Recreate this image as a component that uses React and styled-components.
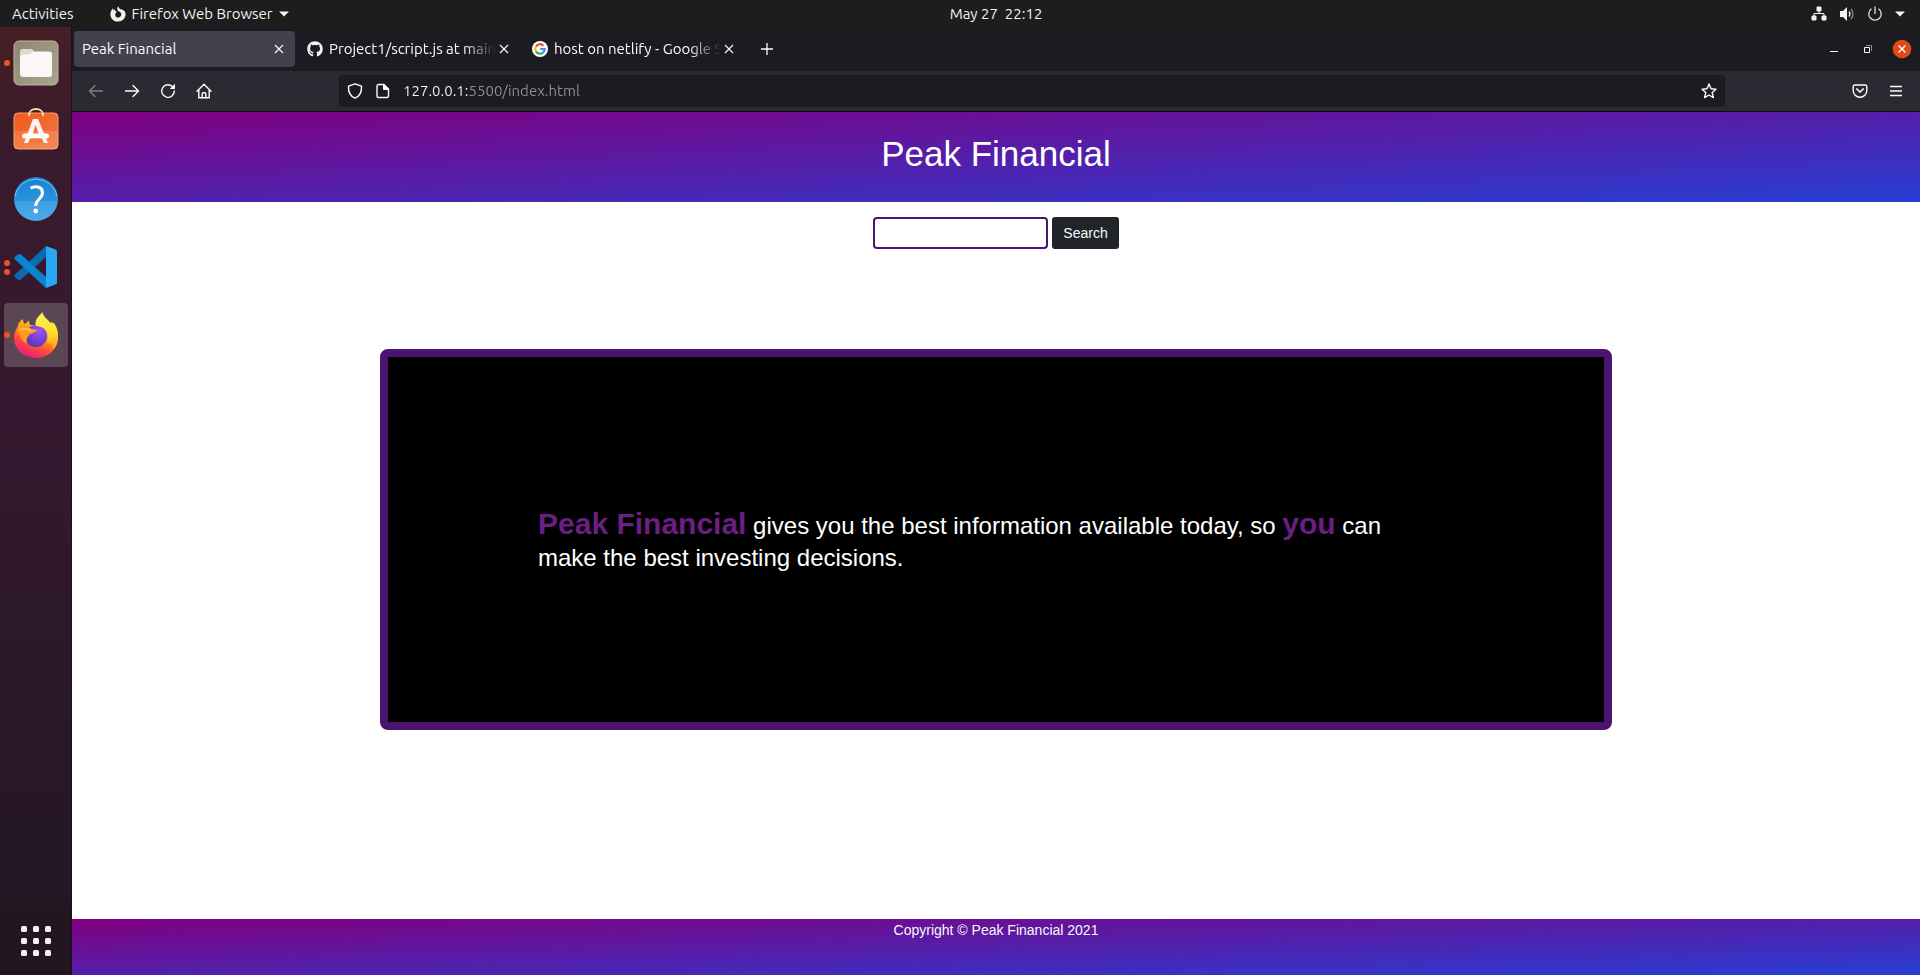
import React from 'react';
import styled, { createGlobalStyle, css } from 'styled-components';
import { FaGithub } from 'react-icons/fa';

const GlobalStyle = createGlobalStyle`
  *, *::before, *::after { box-sizing: border-box; }
  body { margin: 0; background: #fff; }
  button { font: inherit; color: inherit; border: 0; padding: 0; background: none; cursor: pointer; }
  svg { display: block; flex: none; }
  p, h1 { margin: 0; }
`;

const uiFont = "Ubuntu, 'Noto Sans', sans-serif";
const pageFont = "'Liberation Sans', Arial, sans-serif";
const brandGradient = 'linear-gradient(to bottom right, #800080, #273ed4)';

const Desktop = styled.div`
  display: flex;
  flex-direction: column;
  min-height: 100vh;
  font: 15px/20px ${uiFont};
  color: #f2f2f2;
`;

const TopBar = styled.header`
  display: grid;
  grid-template-columns: 72px 1fr auto 1fr;
  align-items: center;
  height: 27px;
  background: #1d1d1d;
`;

const TopMenus = styled.nav`
  grid-column: 1 / 3;
  display: flex;
  align-items: center;
  gap: 36px;
  padding-left: 12px;
`;

const TopButton = styled.button`
  display: flex;
  align-items: center;
  gap: 6px;
`;

const StatusArea = styled.button`
  justify-self: end;
  display: flex;
  align-items: center;
  gap: 12px;
  padding-right: 15px;
`;

const Workspace = styled.div`
  flex: 1;
  display: flex;
`;

const Dock = styled.nav`
  flex: none;
  display: flex;
  flex-direction: column;
  gap: 4px;
  width: 72px;
  padding: 4px 3px 2px 4px;
  background: linear-gradient(#471f25, #3a1a2c 12%, #351930 40%, #251725 88%, #23151d);
  border-right: 1px solid #1c1018;
`;

const DockItem = styled.button`
  display: flex;
  align-items: center;
  width: 64px;
  height: 64px;
  border-radius: 4px;
  background: ${(p) => (p.$active ? '#5b4653' : 'none')};
  ${(p) => p.$last && css`margin-top: auto;`}
`;

const RunningDots = styled.span`
  display: flex;
  flex-direction: column;
  align-items: center;
  gap: 3px;
  width: 6px;
`;

const Dot = styled.span`
  width: 6px;
  height: 6px;
  border-radius: 50%;
  background: #e95420;
`;

const DockIcon = styled.span`
  display: block;
  margin-left: 3px;
`;

const Browser = styled.main`
  flex: 1;
  min-width: 0;
  display: flex;
  flex-direction: column;
`;

const TabStrip = styled.div`
  display: flex;
  align-items: center;
  gap: 4px;
  height: 44px;
  padding-left: 2px;
  background: #1c1b22;
`;

const Tab = styled.div`
  display: flex;
  align-items: center;
  width: 221px;
  height: 36px;
  padding: 0 8px;
  border-radius: 4px;
  background: ${(p) => (p.$active ? '#42414d' : 'none')};
`;

const TabLabel = styled.button`
  flex: 1;
  min-width: 0;
  display: flex;
  align-items: center;
  gap: 6px;
`;

const TabTitle = styled.span`
  flex: 1;
  overflow: hidden;
  text-align: left;
  white-space: nowrap;
  color: #fbfbfe;
  ${(p) => p.$fade && css`mask-image: linear-gradient(to left, transparent, #000 32px);`}
`;

const IconButton = styled.button`
  flex: none;
  display: grid;
  place-items: center;
  width: ${(p) => p.$size || 36}px;
  height: ${(p) => p.$size || 36}px;
  color: #fbfbfe;
  opacity: ${(p) => (p.disabled ? 0.4 : 1)};
`;

const WindowControls = styled.div`
  display: flex;
  align-items: center;
  gap: 10px;
  margin-left: auto;
  padding-right: 6px;
`;

const Toolbar = styled.div`
  display: flex;
  align-items: center;
  height: 41px;
  padding: 0 6px;
  background: #2b2a33;
  border-bottom: 1px solid #0c0c0d;
`;

const AddressBar = styled.label`
  flex: 1;
  min-width: 0;
  display: flex;
  align-items: center;
  gap: 12px;
  height: 32px;
  margin: 0 117px;
  padding-left: 8px;
  border-radius: 4px;
  background: #1c1b22;
  color: #fbfbfe;
`;

const AddressInput = styled.input`
  flex: 1;
  min-width: 0;
  border: 0;
  padding: 0;
  outline: 0;
  font: inherit;
  color: #fbfbfe;
  background: linear-gradient(to right, #fbfbfe 65px, #8f8f99 65px) text;
  -webkit-text-fill-color: transparent;
`;

const Site = styled.div`
  flex: 1;
  display: flex;
  flex-direction: column;
  background: #fff;
  font-family: ${pageFont};
  font-size: 14px;
`;

const SiteHeader = styled.header`
  height: 90px;
  padding-top: 21px;
  background: ${brandGradient};
  color: #fff;
  text-align: center;
`;

const SiteTitle = styled.h1`
  font-size: 35px;
  font-weight: 400;
  line-height: 42px;
`;

const SearchForm = styled.form`
  display: flex;
  justify-content: center;
  gap: 4px;
  padding-top: 15px;
`;

const SearchInput = styled.input`
  width: 175px;
  height: 32px;
  padding: 4px 8px;
  border: 2px solid #4a1570;
  border-radius: 4px;
  background: #fff;
  font: 14px/20px ${pageFont};
`;

const SearchButton = styled.button`
  width: 67px;
  height: 32px;
  border-radius: 3px;
  background: #212529;
  color: #f8f9fa;
`;

const Banner = styled.section`
  display: flex;
  align-items: center;
  width: 66.6667%;
  min-height: 381px;
  margin: 100px auto;
  padding: 4px 150px 0;
  border: 8px solid #4a1570;
  border-radius: 8px;
  background: #000;
  color: #fff;
`;

const Pitch = styled.p`
  max-width: 880px;
  font-size: 24px;
  line-height: 32px;
`;

const Highlight = styled.strong`
  font-size: 30px;
  line-height: 30px;
  color: #6a1f82;
`;

const SiteFooter = styled.footer`
  height: 56px;
  margin-top: auto;
  background: ${brandGradient};
  color: #f8f9fa;
  line-height: 22px;
  text-align: center;
`;

const Svg = ({ size = 16, w, h, box, children }) => (
  <svg width={w || size} height={h || size} viewBox={box || `0 0 ${w || size} ${h || size}`} fill="none" aria-hidden="true">
    {children}
  </svg>
);

const stroke = { stroke: 'currentColor', strokeWidth: 1.4, strokeLinecap: 'round', strokeLinejoin: 'round' };

const Caret = () => (
  <Svg w={10} h={6}><path d="M0 0.5h10L5 5.5z" fill="#f2f2f2" /></Svg>
);

const FirefoxMono = () => (
  <Svg>
    <path d="M8 0.2 10 3.2C13 3 15.8 5.4 15.6 8.6 15.4 12.8 12.2 15.6 8 15.6 3.6 15.6.4 12.4.4 8.4.4 5.8 1.4 3.6 3 2.2L3.2 4 5 3.4 5.2 5 7 5.8 5.6 7C4.6 9.4 5.8 11.6 8 11.6 10.4 11.6 11.6 9.8 11.2 7.6 10.8 6 9.6 5.6 8.4 5.2 7 4.2 7 2 8 .2Z" fill="#f2f2f2" />
  </Svg>
);

const CloseX = () => <Svg size={10}><path d="M1 1l8 8M9 1l-8 8" stroke="currentColor" strokeWidth="1.1" /></Svg>;

const GoogleIcon = () => (
  <Svg>
    <circle cx="8" cy="8" r="8" fill="#fff" />
    <g strokeWidth="2.2">
      <path d="M3.9 5.6A4.7 4.7 0 0 1 11.4 4.7" stroke="#ea4335" />
      <path d="M3.9 5.6A4.7 4.7 0 0 0 3.9 10.4" stroke="#fbbc05" />
      <path d="M3.9 10.4A4.7 4.7 0 0 0 11 11.6" stroke="#34a853" />
      <path d="M11 11.6A4.7 4.7 0 0 0 12.7 8H8.2" stroke="#4285f4" />
    </g>
  </Svg>
);

const FilesIcon = () => (
  <Svg size={46}>
    <defs>
      <linearGradient id="files" x1="0" y1="0" x2="1" y2="1"><stop offset="0" stopColor="#8d8773" /><stop offset="1" stopColor="#aaa48e" /></linearGradient>
    </defs>
    <rect x="1" y="1" width="44" height="44" rx="5" fill="url(#files)" stroke="#bbb6a6" />
    <path d="M7 12a3 3 0 0 1 3-3h8c1.6 0 2 .6 2.600 2l.8 1.500H36v8H7z" fill="#dedacb" />
    <path d="M7 17a3 3 0 0 1 3-2.500h6c2 0 2.500-3 5-3h15a3 3 0 0 1 3 3V34a3 3 0 0 1-3 3H10a3 3 0 0 1-3-3z" fill="#f9f8f6" />
  </Svg>
);

const SoftwareIcon = () => (
  <Svg size={46} box="0 3 46 46">
    <defs>
      <linearGradient id="bag" x1="0" y1="0" x2="1" y2="1"><stop offset="0" stopColor="#f4581c" /><stop offset="1" stopColor="#f07b42" /></linearGradient>
    </defs>
    <rect x="1" y="8" width="44" height="36" rx="4" fill="url(#bag)" stroke="#f8a06e" />
    <path d="M1 26h44v14a4 4 0 0 1-4 4H5a4 4 0 0 1-4-4z" fill="#fff" opacity=".12" />
    <path d="M16 11V10c0-8 14-8 14 0v1" stroke="#f5d9a6" strokeWidth="2" />
    <path d="M20 14h5l10 24h-6L22.500 20 17 38h-6z" fill="#fdf3ee" />
    <path d="M11.500 31h22" stroke="#fff" strokeWidth="5" strokeLinecap="round" />
    <path d="M17 33.500h12l1.800 4.500H15z" fill="#f2753a" />
  </Svg>
);

const HelpIcon = () => (
  <Svg size={46}>
    <defs>
      <linearGradient id="help" x1="0" y1="0" x2="0" y2="1"><stop offset="0" stopColor="#1d80d2" /><stop offset=".54" stopColor="#2795df" /><stop offset=".55" stopColor="#419fe1" /><stop offset="1" stopColor="#4aaae8" /></linearGradient>
    </defs>
    <circle cx="23" cy="23" r="22" fill="url(#help)" />
    <path d="M2 20a21.500 21.500 0 0 1 42 0" stroke="#77c2ee" />
    <path d="M17.500 12.200c6-3 12-1 12 4.300 0 6.500-6.800 6.500-6.800 13.500" stroke="#fff" strokeWidth="3" />
    <circle cx="22.700" cy="35" r="2.400" fill="#fff" />
  </Svg>
);

const CodeIcon = () => (
  <Svg size={46}>
    <path d="M2 30.500 33 2v11L8 35.500a2.500 2.500 0 0 1-3 0l-3-2.300a2 2 0 0 1 0-2.700z" fill="#0b69ad" />
    <path d="M2 15.500 33 44V33L8 10.500a2.500 2.500 0 0 0-3 0l-3 2.300a2 2 0 0 0 0 2.700z" fill="#0785cf" />
    <path d="M33 2l9.500 3.500c1 .5 1.500 1.200 1.500 2.300v30.400c0 1-.5 1.800-1.500 2.300L33 44z" fill="#2aa7f2" />
  </Svg>
);

const FirefoxIcon = () => (
  <Svg size={46}>
    <defs>
      <linearGradient id="fox" x1=".8" y1="0" x2=".25" y2="1"><stop offset="0" stopColor="#ffec3d" /><stop offset=".42" stopColor="#ff9a1f" /><stop offset=".68" stopColor="#ff4a3a" /><stop offset="1" stopColor="#e31587" /></linearGradient>
      <linearGradient id="flame" x1=".5" y1="0" x2=".6" y2="1"><stop offset="0" stopColor="#fff35a" /><stop offset=".55" stopColor="#ffdf2e" /><stop offset="1" stopColor="#ff9820" /></linearGradient>
      <radialGradient id="globe" cx=".65" cy=".25" r=".8"><stop offset="0" stopColor="#a050f8" /><stop offset=".6" stopColor="#7440d4" /><stop offset="1" stopColor="#4b3ab0" /></radialGradient>
    </defs>
    <path d="M5 14C5 11 7.500 8.500 10 7c0 2 .5 3.500 1.500 5 2-1.500 4-2 4-4l1.500 5h10l14-2c3 4 4.500 9 4 15-.8 12-10 20-22 20S1 37 1 26c0-4 1.500-8.500 4-12z" fill="url(#fox)" />
    <circle cx="23" cy="24" r="11" fill="url(#globe)" />
    <path d="M22.500 13C22 7 26 4 29.500 0c.5 5 5.500 7 8.500 11.500l.5-2c3.500 4 6 8 6.500 13.500.5 7-2 12-5 15 1-5-2-7-6-7 3-9-1-15.500-8-16.500-2-.3-3.300-.7-3.500-1.500z" fill="url(#flame)" />
    <path d="M5 15c4-2 9-2 12 1 2 1.500 6 1 7 2-1 3-6 3-8 5-2.500 3-3 6-2 9-5-3-9-9-9-17z" fill="#ff9b22" />
    <path d="M7 18c4-2 8-1 11 1" stroke="#ffc531" strokeWidth="2" />
  </Svg>
);

const AppsIcon = () => (
  <Svg size={46}>
    {[8, 20, 32].map((y) => [8, 20, 32].map((x) => (
      <rect key={`${x}-${y}`} x={x} y={y} width="6" height="6" rx="1.500" fill="#f2f2f0" />
    )))}
  </Svg>
);

const dockItems = [
  { name: 'Files', icon: <FilesIcon />, dots: 1 },
  { name: 'Ubuntu Software', icon: <SoftwareIcon />, dots: 0 },
  { name: 'Help', icon: <HelpIcon />, dots: 0 },
  { name: 'Visual Studio Code', icon: <CodeIcon />, dots: 2 },
  { name: 'Firefox', icon: <FirefoxIcon />, dots: 1, active: true },
  { name: 'Show Applications', icon: <AppsIcon />, dots: 0, last: true },
];

const tabs = [
  { title: 'Peak Financial', active: true },
  { title: 'Project1/script.js at main', icon: <FaGithub size={16} />, fade: true },
  { title: 'host on netlify - Google Search', icon: <GoogleIcon />, fade: true },
];

export default function App() {
  return (
    <Desktop>
      <GlobalStyle />
      <TopBar>
        <TopMenus>
          <TopButton>Activities</TopButton>
          <TopButton><FirefoxMono />Firefox Web Browser<Caret /></TopButton>
        </TopMenus>
        <TopButton>May 27&nbsp; 22:12</TopButton>
        <StatusArea aria-label="System menu">
          <Svg>
            <path d="M6 1h4v4H6zM1 10h4v4H1zM11 10h4v4h-4z" fill="#f2f2f2" stroke="#f2f2f2" strokeLinejoin="round" />
            <path d="M8 5v3M3 10V7.500h10V10" stroke="#f2f2f2" />
          </Svg>
          <Svg>
            <path d="M1 5h3l4-4v14l-4-4H1z" fill="#f2f2f2" />
            <path d="M10 5.500q2 2.500 0 5" stroke="#f2f2f2" strokeWidth="1.300" />
            <path d="M12 3q4 5 0 10" stroke="#888" strokeWidth="1.300" />
          </Svg>
          <Svg>
            <path d="M4.500 2.800a6.200 6.200 0 1 0 7 0M8 .5V8" stroke="#e0e0e0" strokeWidth="1.300" />
          </Svg>
          <Caret />
        </StatusArea>
      </TopBar>

      <Workspace>
        <Dock aria-label="Dock">
          {dockItems.map((item) => (
            <DockItem key={item.name} aria-label={item.name} $active={item.active} $last={item.last}>
              <RunningDots>
                {Array.from({ length: item.dots }, (_, i) => <Dot key={i} />)}
              </RunningDots>
              <DockIcon>{item.icon}</DockIcon>
            </DockItem>
          ))}
        </Dock>

        <Browser>
          <TabStrip>
            {tabs.map((tab) => (
              <Tab key={tab.title} $active={tab.active}>
                <TabLabel>
                  {tab.icon}
                  <TabTitle $fade={tab.fade}>{tab.title}</TabTitle>
                </TabLabel>
                <IconButton $size={16} aria-label={`Close ${tab.title}`}><CloseX /></IconButton>
              </Tab>
            ))}
            <IconButton aria-label="New tab">
              <Svg size={12}><path d="M6 0v12M0 6h12" stroke="currentColor" strokeWidth="1.300" /></Svg>
            </IconButton>
            <WindowControls>
              <IconButton $size={24} aria-label="Minimize">
                <Svg size={10}><path d="M1 7.500h8" stroke="currentColor" /></Svg>
              </IconButton>
              <IconButton $size={24} aria-label="Restore">
                <Svg size={10}>
                  <path d="M1.500 3.500h5v5h-5z" stroke="currentColor" />
                  <path d="M3 1.500h5.500V7" stroke="#888790" />
                </Svg>
              </IconButton>
              <IconButton $size={24} aria-label="Close window">
                <Svg size={20}>
                  <circle cx="10" cy="10" r="9.300" fill="#df4a16" />
                  <path d="M6.500 6.500l7 7M13.500 6.500l-7 7" stroke="#fff" strokeWidth="1.400" />
                </Svg>
              </IconButton>
            </WindowControls>
          </TabStrip>

          <Toolbar>
            <IconButton aria-label="Back" disabled>
              <Svg><path d="M14.500 8H1.500M7 2.500L1.500 8 7 13.500" {...stroke} /></Svg>
            </IconButton>
            <IconButton aria-label="Forward">
              <Svg><path d="M1.500 8h13M9 2.500L14.500 8 9 13.500" {...stroke} /></Svg>
            </IconButton>
            <IconButton aria-label="Reload">
              <Svg>
                <path d="M14.300 8A6.300 6.300 0 1 1 12.300 3.400" {...stroke} />
                <path d="M15 .8V6H9.800z" fill="currentColor" />
              </Svg>
            </IconButton>
            <IconButton aria-label="Home">
              <Svg>
                <path d="M1 8.200L8 1.200l7 7M2.800 7v7.800h10.400V7M6.200 14.500v-3.700q0-1 1-1h1.600q1 0 1 1v3.700" {...stroke} />
              </Svg>
            </IconButton>
            <AddressBar>
              <Svg><path d="M8 .8l6.500 2.400c.3 5-1.200 9.800-6.500 12C2.700 13 1.200 8.200 1.500 3.200z" {...stroke} /></Svg>
              <Svg>
                <path d="M3.500 1.500h5.200l4.800 4.800v6.700a1.500 1.500 0 0 1-1.500 1.500H3.500A1.500 1.500 0 0 1 2 13V3a1.500 1.500 0 0 1 1.500-1.500z" {...stroke} />
                <path d="M8.700 1.500v4.800h4.800z" fill="currentColor" {...stroke} />
              </Svg>
              <AddressInput aria-label="Address" defaultValue="127.0.0.1:5500/index.html" />
              <IconButton $size={32} aria-label="Bookmark this page">
                <Svg><path d="M8 1l2 4.700 5 .5-3.800 3.400 1.200 5L8 12l-4.400 2.600 1.200-5L1 6.200l5-.5z" {...stroke} /></Svg>
              </IconButton>
            </AddressBar>
            <IconButton aria-label="Save to Pocket">
              <Svg>
                <path d="M2.500 2h11A1.300 1.300 0 0 1 14.800 3.300V7.500a6.800 6.800 0 0 1-13.600 0V3.300A1.300 1.300 0 0 1 2.500 2z" {...stroke} />
                <path d="M4.800 6L8 9l3.200-3" {...stroke} strokeWidth="1.700" />
              </Svg>
            </IconButton>
            <IconButton aria-label="Open application menu">
              <Svg size={12}><path d="M0 1.500h12M0 6h12M0 10.500h12" stroke="currentColor" strokeWidth="1.300" /></Svg>
            </IconButton>
          </Toolbar>

          <Site>
            <SiteHeader>
              <SiteTitle>Peak Financial</SiteTitle>
            </SiteHeader>
            <SearchForm onSubmit={(e) => e.preventDefault()}>
              <SearchInput type="text" aria-label="Search" />
              <SearchButton type="submit">Search</SearchButton>
            </SearchForm>
            <Banner>
              <Pitch>
                <Highlight>Peak Financial</Highlight> gives you the best information available today, so{' '}
                <Highlight>you</Highlight> can make the best investing decisions.
              </Pitch>
            </Banner>
            <SiteFooter>
              <p>Copyright © Peak Financial 2021</p>
            </SiteFooter>
          </Site>
        </Browser>
      </Workspace>
    </Desktop>
  );
}
